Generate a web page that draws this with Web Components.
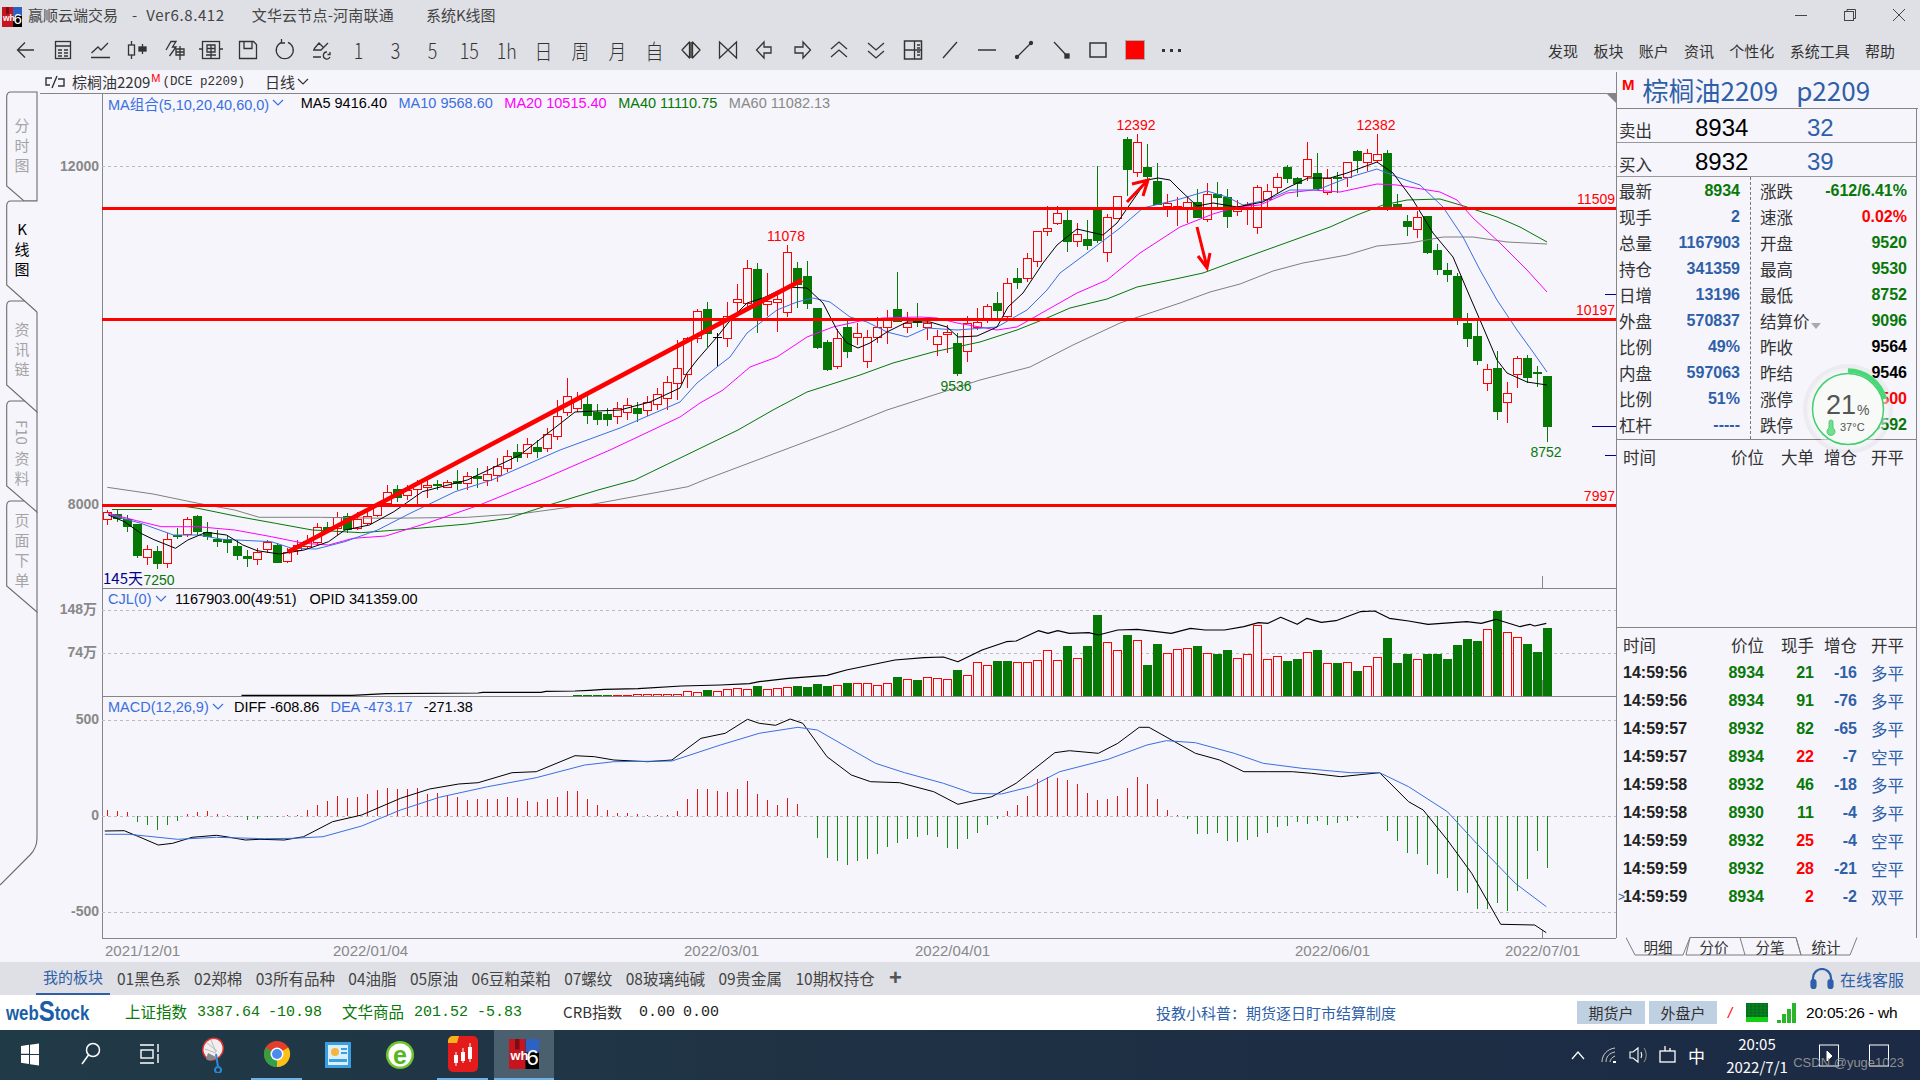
<!DOCTYPE html>
<html lang="zh"><head><meta charset="utf-8"><title>赢顺云端交易</title>
<style>
html,body{margin:0;padding:0;width:1920px;height:1080px;overflow:hidden;background:#f5f5fb;font-family:"Noto Sans CJK SC","Liberation Sans",sans-serif}
</style></head>
<body>
<app-window></app-window>
<script>
const CJK='"Noto Sans CJK SC","Liberation Sans",sans-serif';
const ARI='"Liberation Sans","Noto Sans CJK SC",sans-serif';
function def(name,css,html){
  customElements.define(name,class extends HTMLElement{
    constructor(){super();const s=this.attachShadow({mode:'open'});
      s.innerHTML=`<style>${css}</style>${typeof html==='function'?html(this):html}`;}
  });
}
/* ---------- toolbar ---------- */
const ic=(b,w=24)=>`<svg width="${w}" height="24" viewBox="0 0 24 24" fill="none" stroke="#333" stroke-width="1.3">${b}</svg>`;
const appIcon=(s)=>`<svg width="${s}" height="${s}" viewBox="0 0 20 20"><rect width="20" height="20" fill="#000"/><rect width="11" height="20" fill="#c8141c"/><rect x="11" width="9" height="9" fill="#2b62c4"/><rect x="4" y="0" width="3" height="7" fill="#7a0e12"/><text x="1" y="14" font-family="Liberation Sans" font-weight="700" font-size="8.5" fill="#fff">wh</text><text x="11.5" y="17" font-family="Liberation Sans" font-size="15" fill="#fff">6</text></svg>`;
const TOOLS=[
 ic('<path d="M20 12H4M11 4.5 3.500 12 11 19.500"/>'),
 ic('<rect x="4.500" y="3.500" width="15" height="17"/><path d="M4.500 8h15M7 12h4M13 12h4M7 15h4M13 15h4M7 18h4M13 18h4"/>'),
 ic('<path d="M3.500 15 10 9l3 3 7-7M3 19.500h19"/>'),
 ic('<rect x="3.500" y="7" width="6" height="10"/><path d="M6.500 3v4M6.500 17v4"/><rect x="14" y="9" width="7" height="4" fill="#333"/><path d="M17.500 6v3M17.500 13v3"/>'),
 ic('<path d="M4 12 9 3.500h5L10.500 9H14l-6.500 9M14 11h8v6h-8zM18 8v14M14 14h8"/>'),
 ic('<rect x="3.500" y="3.500" width="17" height="17"/><path d="M0 11h3.500M20.500 11H24M8 7h8v7H8zM8 10.500h8M12 7v14M7 17h10"/>'),
 ic('<path d="M3.500 3.500h14l3 3v14h-17zM8 3.500v7h8v-7"/>'),
 ic('<path d="M15 4.300A8.500 8.500 0 1 1 8.500 4.300M8.500 1v4H12"/>'),
 ic('<path d="M3 12h8l7-7M3 19h8M4 11l5-6 4 4M17 14a3.500 3.500 0 1 0 3 5M20 14v2.500h-2.500"/>'),
 '1','3','5','15','1h','日','周','月','自',
 ic('<path d="M10.500 4 3 12l7.500 8zM13.500 4 21 12l-7.500 8zM12 4v16" stroke-linejoin="round"/>'),
 ic('<path d="M3.500 4v16L12 12zM20.500 4v16L12 12z"/>'),
 ic('<path d="M11 4 3.500 12l7.500 8v-5h7V9h-7z"/>'),
 ic('<path d="M13 4l7.500 8-7.500 8v-5H5V9h8z"/>'),
 ic('<path d="M4 11l8-7 8 7M4 19l8-7 8 7"/>'),
 ic('<path d="M4 5l8 7 8-7M4 13l8 7 8-7"/>'),
 ic('<rect x="3.500" y="3" width="17" height="18" stroke-width="1.500"/><path d="M3.500 12h17M13.500 3v18M16 7h3M16 10h3M16 14h3M16 17h3"/>'),
 ic('<path d="M5 20 19 4"/>'),
 ic('<path d="M3 12h18" stroke-width="1.500"/>'),
 ic('<path d="M5 19 19 5"/><circle cx="5" cy="19" r="1.500" fill="#333"/><circle cx="19" cy="5" r="1.500" fill="#333"/>'),
 ic('<path d="M5 4 19 19"/><rect x="16" y="16" width="4" height="4" fill="#333"/>'),
 ic('<rect x="4" y="5" width="16" height="14" stroke-width="1.500"/>'),
 '<span class="rs"></span>',
 '<span class="dots"><i></i><i></i><i></i></span>'
];
def('tool-bar',`:host{display:flex;height:35px;background:#dfe0e5;padding-left:8px;align-items:center;box-sizing:border-box;padding-bottom:5px;color:#333}
.t{width:36.95px;display:flex;justify-content:center;align-items:center;font:300 21px ${CJK};flex:none}
.t span.n{display:inline-block;transform:scaleX(.85);margin-top:-1px}
.rs{display:block;width:18px;height:18px;background:#f00;border:1px solid #aaa}
.dots{display:flex;gap:5px}.dots i{display:block;width:3px;height:3px;background:#333}
.menu{margin-left:auto;display:flex;gap:15.3px;padding-right:25px;font:15px ${CJK};color:#333;font-weight:400}`,
 `${TOOLS.map(t=>`<div class="t">${t.length<3?`<span class="n">${t}</span>`:t}</div>`).join('')}
 <div class="menu"><span>发现</span><span>板块</span><span>账户</span><span>资讯</span><span>个性化</span><span>系统工具</span><span>帮助</span></div>`);

def('title-bar',`:host{display:flex;height:35px;background:#dfe0e5;align-items:center;font:15px ${CJK};color:#444;padding-left:2px;position:relative;white-space:pre;box-sizing:border-box;padding-bottom:6px}
svg{flex:none}.a{margin-left:6px}.d{margin-left:14px}.e{margin-left:9px;letter-spacing:.6px}.b{margin-left:27px;letter-spacing:.2px}.c{margin-left:32px}
.ctl{margin-left:auto;display:flex;align-items:center}
.ctl div{width:49px;display:flex;justify-content:center}`,
 `<span style="display:flex;margin-top:5px">${appIcon(20)}</span><span class="a">赢顺云端交易</span><span class="d">-</span><span class="e">Ver6.8.412</span><span class="b">文华云节点-河南联通</span><span class="c">系统K线图</span>
 <div class="ctl"><div><svg width="14" height="14" fill="none" stroke="#444"><path d="M1 7.500h12"/></svg></div><div><svg width="14" height="14" fill="none" stroke="#444"><rect x="1.500" y="3.500" width="9" height="9"/><path d="M4 3.500v-2h8.500v9h-2"/></svg></div><div style="margin-right:-3px;width:49px"><svg width="14" height="14" fill="none" stroke="#444"><path d="M1 1l12 12M13 1 1 13"/></svg></div></div>`);

/* ---------- side tabs ---------- */
def('side-tabs',`:host{display:block;width:38px;flex:none;position:relative;font:15px ${CJK};color:#a4a4a4}
svg{position:absolute;left:0;top:0}
.col{position:relative;padding-top:22px;display:flex;flex-direction:column}
.i{display:flex;justify-content:center;padding-left:7px;box-sizing:border-box;width:37px}
.i span{writing-mode:vertical-rl;letter-spacing:5px;line-height:17px}
.i b{font-weight:400;letter-spacing:0;margin-bottom:6px}
.on{color:#000}.on span{text-orientation:upright}`,
 `<svg width="38" height="892" viewBox="0 70 38 892" fill="none" stroke="#6c6c6c" stroke-width="1.100">
  <path fill="#f5f5fb" d="M37 512 V612 L6.700 586 V506 Q6.700 501 11 501H37"/>
  <path fill="#f5f5fb" d="M37 412 V512 L6.700 486 V406 Q6.700 401 11 401H37"/>
  <path fill="#f5f5fb" d="M37 312 V412 L6.700 385 V306 Q6.700 301 11 301H37"/>
  <path fill="#f5f5fb" d="M37 92 V201 H24 L6.700 186 V97 Q6.700 92 11 92Z"/>
  <path fill="#f5f5fb" d="M37 201 H11 Q6.700 201 6.700 206 V285 L37 312"/>
  <path d="M37 612 V838 Q37 848 30 855 L0 885"/>
 </svg>
 <div class="col">
  <div class="i" style="height:109px;padding-top:26px;box-sizing:border-box"><span>分时图</span></div>
  <div class="i on" style="height:100px;padding-top:21px;box-sizing:border-box"><span>K线图</span></div>
  <div class="i" style="height:100px;padding-top:21px;box-sizing:border-box"><span>资讯链</span></div>
  <div class="i" style="height:100px;padding-top:19px;box-sizing:border-box"><span><b>F10</b>资料</span></div>
  <div class="i" style="height:100px;padding-top:12px;box-sizing:border-box"><span>页面下单</span></div>
 </div>`);

/* ---------- symbol bar ---------- */
def('symbol-bar',`:host{display:flex;height:23px;align-items:center;font:15px ${CJK};color:#333;padding-left:7px;box-sizing:border-box}
sup{color:#f00;font:11px ${ARI};vertical-align:6px;margin-left:1px}
.m{font:12.5px "Liberation Mono",monospace;margin-left:2px}
.d{margin-left:20px}svg{margin-left:2px}`,
 `<svg width="20" height="14" viewBox="0 0 20 14" fill="none" stroke="#333" stroke-width="1.400" style="margin:0 7px 0 0"><path d="M7 3H1v7h4M13 4h6v7h-6M12 1 7 13"/></svg><span>棕榈油2209<sup>M</sup></span><span class="m">(DCE p2209)</span><span class="d">日线</span><svg width="12" height="8" fill="none" stroke="#333" stroke-width="1.200"><path d="M1 1l5 5 5-5"/></svg>`);

/* ---------- chart data ---------- */
const Z9=(a)=>a.map(([x,y])=>[100+x/2.45,480+y/3]);
const Z12=(a)=>a.map(([x,y])=>[100+x/1.0316,590+y/3]);
const c9=[['r',90,95,118,135],['g',90,103,118,125],['g',105,118,140,155],['g',132,132,228,235],['r',195,208,230,255],['g',198,213,252,268],['r',160,178,250,263],['g',145,165,172,178],['r',110,118,162,170],['g',105,108,155,165],['g',125,155,170,180],['g',150,177,185,200],['g',165,178,190,220],['g',180,198,228,240],['g',210,228,238,260],['r',205,215,238,255],['r',180,187,208,220],['g',190,195,248,250],['r',205,215,242,248],['r',180,195,210,225],['r',165,183,197,205],['r',130,142,187,195],['g',125,140,150,160],['r',95,110,145,165],['g',100,108,150,160],['r',95,118,143,150],['r',95,108,128,135],['r',65,78,104,110],['r',15,37,68,75],['g',15,27,55,65],['r',15,30,45,60],['r',0,8,28,75],['r',0,16,20,55],['g',0,12,16,30],['r',0,5,22,25]]
 .map(([t,a,b,c,d])=>[t,480+a/3,480+b/3,480+c/3,480+d/3]);
const cRest=[['g',470,481,484,490],['r',472,476,483,490],['g',468,476,479,488],['r',466,474,480,486],['r',458,466,475,482],['r',450,456,468,472],['g',444,452,458,462],['r',438,444,453,458],['g',440,447,452,458],['r',428,434,448,452],['r',400,416,436,440],['r',378,396,412,416],['r',392,399,408,412],['g',396,404,416,424],['g',404,412,420,425],['g',408,414,420,426],['r',402,408,416,424],['r',398,405,412,420],['g',402,408,414,422],['r',396,402,410,416],['r',388,394,404,410],['r',376,382,398,410],['r',340,368,383,400],
['r',337,338,374,388],['r',309,311,338,343],['g',302,309,334,347],['k',333,337,337,367],['r',302,316,338,347],['r',284,299,302,317],['r',260,268,303,307],['g',263,269,318,333],['r',273,301,304,316],['r',291,299,302,332],['r',245,252,312,317],['g',262,268,285,308],['g',261,276,304,309],['g',308,308,348,349],['g',340,342,370,371],['r',329,338,366,369],['g',321,327,352,358],['r',323,333,337,345],['r',330,337,361,368],['r',317,327,337,343],['r',310,319,327,344],['g',272,309,322,322],['r',312,323,327,333],['g',303,321,323,327],['r',317,323,327,340],['r',330,336,344,356],['r',325,332,333,353],['g',333,343,374,376],['r',316,323,351,362],['r',308,322,327,330],['r',304,306,320,323],['g',292,303,311,318],['r',278,283,316,318],['g',268,278,283,289],['r',253,258,278,282],['r',231,231,261,267],['r',206,228,231,236],['r',206,213,223,225],['g',210,220,242,252],['r',223,234,241,247],['g',220,239,246,250],['g',166,210,241,243],['r',214,217,252,262],['r',196,196,218,219],['g',137,139,170,196],['r',134,142,172,177],['g',144,167,177,180],['g',163,181,205,205],['r',194,203,206,217],['r',197,206,209,226],
['r',197,202,209,223],['g',189,202,218,218],['r',183,194,219,222],['g',182,194,198,208],['g',189,197,217,228],['r',200,207,211,216],['r',202,205,207,225],['r',185,187,227,234],['r',184,191,199,208],['r',173,177,187,193],['g',165,167,179,183],['g',177,178,184,197],['r',142,159,176,181],['g',153,173,189,190],['r',169,178,192,195],['g',172,177,179,193],['r',162,162,177,187],['g',150,151,161,173],['r',149,153,162,171],['r',134,154,160,163],['g',150,153,210,211],['g',194,204,207,207],['g',215,221,227,236],['r',211,217,229,238],['g',216,216,253,254],['g',244,250,270,275],['g',263,270,275,282],['g',273,276,318,325],['g',313,323,339,347],['g',320,336,361,365],['r',364,369,383,391],['g',351,368,412,420],['r',382,393,402,423],['r',356,358,374,388],['g',355,358,378,383],['g',366,372,374,387],['g',376,376,427,442]];
const CANDLES=c9.concat(cRest);
const cx=i=>107+10*i, RED='#f00', GRN='#067806';
function candles(){return CANDLES.map((c,i)=>{const [t,h,a,b,l]=c,x=cx(i),H=Math.round(h),A=Math.round(a),B=Math.round(b),L=Math.round(l);
 if(t==='r')return `<path d="M${x+.5} ${H}V${A}M${x+.5} ${B}V${L}" stroke="${RED}"/><rect x="${x-3.5}" y="${A+.5}" width="8" height="${Math.max(B-A,2)}" fill="#f5f5fb" stroke="${RED}"/>`;
 if(t==='k')return `<path d="M${x+.5} ${H}V${L}M${x-4} ${A+.5}H${x+5}" stroke="#000"/>`;
 return `<path d="M${x+.5} ${H}V${L}" stroke="${GRN}"/><rect x="${x-4}" y="${A}" width="9" height="${Math.max(B-A,2)}" fill="${GRN}"/>`;}).join('');}
const poly=(p,c,w=1)=>`<polyline fill="none" stroke="${c}" stroke-width="${w}" stroke-linejoin="round" points="${p.map(q=>q[0].toFixed(1)+','+q[1].toFixed(1)).join(' ')}"/>`;
const MA5=Z9([[20,105],[60,125],[100,160],[130,178],[185,205],[215,180],[260,157],[310,165],[350,195],[385,212],[440,222],[500,210],[560,185],[600,150],[660,135],[720,95],[790,35],[900,0]]).concat([[520,455],[575,412],[620,410],[650,402],[680,388],[687,373],[697,360],[717,337],[732,318],[747,303],[763,298],[787,287],[807,288],[823,303],[837,330],[847,343],[858,348],[870,343],[887,332],[907,322],[930,322],[947,327],[958,337],[977,336],[997,327],[1008,307],[1023,293],[1043,263],[1057,245],[1077,229],[1103,235],[1117,223],[1133,200],[1147,180],[1158,178],[1170,180],[1180,190],[1197,206],[1213,203],[1237,207],[1263,202],[1287,188],[1308,178],[1330,178],[1347,173],[1377,162],[1393,173],[1413,200],[1433,233],[1453,257],[1470,297],[1483,327],[1497,360],[1507,373],[1527,382],[1547,385]]);
const MA10=Z9([[20,103],[100,130],[180,165],[240,165],[300,178],[420,185],[470,205],[530,207],[600,185],[680,150],[760,100],[870,35],[960,0]]).concat([[560,450],[620,428],[680,402],[697,383],[717,367],[730,357],[747,333],[777,310],[797,302],[813,298],[830,302],[850,317],[867,322],[887,332],[907,337],[927,328],[957,330],[997,327],[1027,310],[1047,290],[1060,273],[1087,253],[1120,228],[1143,208],[1180,199],[1207,191],[1227,197],[1243,205],[1267,200],[1290,190],[1317,190],[1347,178],[1377,169],[1397,177],[1420,185],[1443,207],[1463,237],[1480,270],[1497,300],[1517,330],[1533,352],[1547,372]]);
const MA20=Z9([[20,100],[90,122],[150,140],[240,140],[330,150],[420,170],[500,190],[560,195],[620,175],[700,168],[800,130],[930,75],[1080,0]]).concat([[610,450],[680,417],[700,403],[723,390],[750,367],[777,357],[807,337],[833,327],[860,321],[883,318],[920,317],[937,318],[957,323],[997,330],[1017,327],[1047,310],[1077,293],[1107,280],[1140,253],[1180,227],[1213,214],[1237,207],[1260,205],[1287,193],[1313,190],[1340,192],[1377,184],[1397,185],[1440,192],[1457,200],[1473,218],[1500,243],[1527,270],[1547,292]]);
const MA40=Z9([[200,78],[240,85],[340,110],[430,130],[520,150],[640,158],[750,148],[900,132],[1000,115],[1100,75],[1220,30],[1310,0]]).concat([[738,430],[773,410],[807,392],[860,375],[893,363],[933,352],[980,342],[1017,330],[1047,318],[1070,308],[1107,299],[1137,287],[1180,278],[1203,273],[1230,263],[1280,245],[1330,227],[1357,215],[1383,205],[1407,200],[1440,199],[1467,207],[1497,217],[1520,227],[1547,242]]);
const MA60=Z9([[18,22],[130,42],[240,70],[330,90],[390,112],[540,112],[700,115],[900,112],[1040,100],[1220,70],[1330,45],[1440,20],[1480,0]]).concat([[837,430],[887,410],[940,393],[980,380],[1030,367],[1073,345],[1120,323],[1180,303],[1210,292],[1240,284],[1273,271],[1303,263],[1347,255],[1377,246],[1410,243],[1443,237],[1473,237],[1507,242],[1547,244]]);
const txt=(x,y,s,o={})=>`<text x="${x}" y="${y}" font-size="${o.s||14}" text-anchor="${o.a||'middle'}" fill="${o.c||RED}" font-weight="${o.w||400}" font-family='${o.f||ARI}' dominant-baseline="central">${s}</text>`;
const axis=(y,s)=>txt(99,y,s,{a:'end',c:'#888',w:700});
const dash=y=>`<path d="M102 ${y+.5}H1616" stroke="#bbb" stroke-dasharray="3 3" shape-rendering="crispEdges"/>`;
const lineC='#858585';
function kline(){
 return `<path d="M40 93.500H1616M102.500 93V588" stroke="${lineC}" shape-rendering="crispEdges"/>
 ${dash(166)}${axis(166,'12000')}${axis(504,'8000')}
 <g shape-rendering="crispEdges">${candles()}
 <path d="M1592 426.500H1616M1605 294.500H1616M1605 455.500H1616" stroke="#00008b"/>
 <path d="M1542.500 576V588" stroke="#888"/></g>
 <path d="M1606 93 1616 93 1616 103Z" fill="#858585"/>
 <path d="M112 509.500H152" stroke="#067806" stroke-width="1"/>
 ${poly(MA60,'#808080')}${poly(MA40,'#067806')}${poly(MA20,'#f0f')}${poly(MA10,'#3b6fe0')}${poly(MA5,'#000')}
 <path d="M102 208.500H1616M102 319.500H1616M102 505.500H1616" stroke="${RED}" stroke-width="3"/>
 <path d="M288 552 802 280" stroke="${RED}" stroke-width="4.500"/>
 <path d="M1127 202 1147 181M1132 184 1148 180 1143 196" stroke="${RED}" stroke-width="3" fill="none"/>
 <path d="M1197 227 1207 267M1198 256 1207 268 1210 253" stroke="${RED}" stroke-width="3" fill="none"/>
 ${txt(1136,125,'12392')}${txt(1376,125,'12382')}${txt(786,236,'11078')}${txt(956,386,'9536',{c:'#087808'})}
 ${txt(1546,452,'8752',{c:'#087808'})}${txt(1615,199,'11509',{a:'end'})}${txt(1615,310,'10197',{a:'end'})}${txt(1615,496,'7997',{a:'end'})}
 ${txt(159,580,'7250',{c:'#087808'})}${txt(103,577,'145天',{a:'start',c:'#00008b',s:15,f:CJK})}`;
}
const VOL=[[492,315,'g'],[502,315,'g'],[513,315,'g'],[523,315,'g'],[533,314,'r'],[544,314,'r'],[554,313,'r'],[564,313,'r'],[575,313,'r'],[585,313,'r'],[595,313,'r'],[606,303,'r'],[616,307,'r'],[627,300,'g'],[637,304,'r'],[647,297,'r'],[658,294,'r'],[668,298,'r'],[678,288,'g'],[689,297,'r'],[699,295,'r'],[709,292,'r'],[720,288,'g'],[730,291,'g'],[740,282,'g'],[750,288,'g'],[760,286,'r'],[771,279,'g'],[781,279,'r'],[791,279,'r'],[802,285,'r'],[812,279,'r'],[822,261,'g'],[833,268,'r'],[843,270,'g'],[853,262,'r'],[864,264,'r'],[874,267,'r'],[884,240,'g'],[895,256,'r'],[905,216,'r'],[915,226,'r'],[925,213,'g'],[936,213,'g'],[946,217,'r'],[956,216,'r'],[967,210,'r'],[977,181,'r'],[987,211,'r'],[998,168,'g'],[1008,204,'r'],[1018,168,'g'],[1029,75,'g'],[1039,157,'r'],[1049,181,'r'],[1060,135,'g'],[1070,151,'r'],[1080,225,'g'],[1091,162,'g'],[1101,190,'r'],[1111,177,'r'],[1122,174,'r'],[1132,168,'g'],[1142,188,'r'],[1153,192,'g'],[1163,180,'g'],[1173,205,'r'],[1183,192,'r'],[1194,105,'r'],[1204,208,'r'],[1215,198,'r'],[1225,213,'g'],[1235,207,'g'],[1245,187,'r'],[1256,180,'g'],[1266,219,'r'],[1276,219,'g'],[1287,216,'r'],[1297,243,'g'],[1307,229,'r'],[1318,202,'r'],[1328,144,'g'],[1338,219,'g'],[1349,192,'g'],[1359,208,'r'],[1369,192,'g'],[1380,192,'g'],[1390,207,'g'],[1400,165,'g'],[1411,147,'g'],[1421,153,'g'],[1431,117,'r'],[1442,62,'g'],[1452,126,'r'],[1462,141,'r'],[1472,162,'g'],[1483,186,'g'],[1493,114,'g']];
const VLINE=[[146,316],[260,316],[295,311],[390,309],[395,307],[455,307],[460,304],[490,303],[505,301],[520,298],[555,296],[600,288],[640,285],[670,281],[680,275],[710,265],[750,256],[770,240],[820,210],[850,203],[870,201],[885,215],[910,180],[935,155],[945,153],[968,122],[978,130],[988,122],[1000,130],[1020,128],[1030,135],[1050,120],[1070,118],[1090,125],[1105,130],[1125,115],[1140,120],[1160,120],[1180,110],[1195,98],[1205,100],[1218,82],[1235,103],[1245,85],[1260,97],[1275,92],[1300,65],[1315,63],[1330,85],[1350,93],[1370,103],[1395,98],[1410,95],[1425,100],[1440,88],[1465,110],[1475,103],[1480,108],[1492,100]];
function volume(){
 const bars=VOL.map(([zx,top,t])=>{const i=Math.round((zx/1.0316-7)/10),x=cx(i),y=Math.round(590+top/3);
  return t==='g'?`<rect x="${x-4}" y="${y}" width="9" height="${696-y}" fill="${GRN}"/>`:`<rect x="${x-3.5}" y="${y+.5}" width="8" height="${696-y}" fill="#f5f5fb" stroke="${RED}"/>`;}).join('');
 return `<path d="M102 588.500H1616M102.500 588V696" stroke="${lineC}" shape-rendering="crispEdges"/>${dash(610)}${dash(653)}
 ${txt(97,609,'148万',{a:'end',c:'#888',w:700,f:ARI})}${txt(97,652,'74万',{a:'end',c:'#888',w:700,f:ARI})}
 <g shape-rendering="crispEdges">${bars}<path d="M1542.500 680V696" stroke="#888"/></g>${poly(Z12(VLINE),'#000',1.200)}`;
}
const MBARS=[18,16,12,-18,-28,-42,-28,-14,5,12,14,6,4,-4,-12,-10,-2,-4,3,4,18,34,45,60,55,58,65,78,85,80,82,85,65,70,62,58,48,50,50,52,58,55,45,42,50,58,76,75,50,34,18,10,8,5,2,3,4,16,50,82,82,75,72,82,106,66,48,32,55,35,0,-65,-125,-135,-148,-135,-130,-115,-92,-80,-70,-62,-58,-62,-95,-98,-70,-50,-28,-10,15,32,60,110,118,115,108,95,68,48,50,60,85,118,95,52,18,2,-10,-55,-55,-50,-75,-78,-72,-62,-50,-32,-30,-18,-25,-15,-28,-22,-16,-6,0,0,-45,-75,-110,-115,-148,-175,-185,-225,-230,-278,-280,-260,-285,-225,-188,-104,-155];
const DIFF=[[5,723],[25,722],[40,740],[60,765],[75,760],[95,742],[120,736],[130,740],[150,750],[165,748],[190,750],[210,740],[240,695],[270,675],[310,625],[340,597],[370,582],[390,578],[425,548],[450,545],[490,497],[510,500],[530,510],[565,515],[590,510],[620,445],[645,430],[668,388],[680,400],[697,406],[712,387],[725,400],[750,500],[775,555],[795,575],[825,578],[860,605],[885,643],[920,620],[945,580],[985,488],[1000,482],[1030,490],[1050,460],[1072,412],[1082,412],[1130,490],[1155,510],[1180,545],[1205,545],[1230,545],[1250,550],[1280,560],[1320,548],[1350,635],[1365,660],[1390,750],[1415,850],[1445,1003],[1480,1005],[1492,1028]];
const DEA=[[5,733],[30,733],[80,748],[120,742],[170,746],[200,745],[230,740],[270,708],[310,660],[350,622],[400,590],[450,563],[500,525],[530,515],[590,513],[640,465],[680,430],[720,412],[740,420],[770,470],[800,520],[830,548],[870,580],[900,610],[930,612],[960,590],[990,545],[1040,508],[1080,465],[1100,452],[1130,458],[1170,490],[1200,520],[1240,535],[1290,548],[1320,548],[1350,590],[1390,665],[1420,760],[1460,880],[1492,950]];
function macd(){
 const b=MBARS.map((d,i)=>{if(!d)return '';const x=cx(i)+.5,e=816+(-d/3);return `<path d="M${x} 816V${e.toFixed(0)}" stroke="${d>0?'#e81010':'#138a13'}"/>`;}).join('');
 return `<path d="M102 696.500H1616M102.500 696V938" stroke="${lineC}" shape-rendering="crispEdges"/>${dash(720)}${dash(816)}${dash(912)}
 ${axis(719,'500')}${axis(815,'0')}${axis(911,'-500')}
 <g shape-rendering="crispEdges">${b}<path d="M1542.500 930V938" stroke="#888"/></g>${poly(Z12(DIFF),'#000')}${poly(Z12(DEA),'#3b6fe0')}`;
}
const chev=c=>`<svg width="12" height="8" fill="none" stroke="${c}" stroke-width="1.200" style="margin-left:3px;flex:none"><path d="M1 1l5 5 5-5"/></svg>`;
const PANELS={
 k:{y:93,h:495,lh:20,draw:kline,gap:11.5,leg:`<span style="color:#3b6fe0;margin-right:5px">MA组合(5,10,20,40,60,0)${chev('#3b6fe0')}</span><span style="color:#000">MA5 9416.40</span><span style="color:#3b6fe0">MA10 9568.60</span><span style="color:#f0f">MA20 10515.40</span><span style="color:#067806">MA40 11110.75</span><span style="color:#888">MA60 11082.13</span>`},
 v:{y:588,h:108,lh:22,draw:volume,gap:11,leg:`<span style="color:#3b6fe0;width:56px">CJL(0)${chev('#3b6fe0')}</span><span style="color:#000;margin-right:2px">1167903.00(49:51)</span><span style="color:#000">OPID 341359.00</span>`},
 m:{y:696,h:242,lh:22,draw:macd,gap:11,leg:`<span style="color:#3b6fe0;width:115px">MACD(12,26,9)${chev('#3b6fe0')}</span><span style="color:#000">DIFF -608.86</span><span style="color:#3b6fe0">DEA -473.17</span><span style="color:#000">-271.38</span>`}
};
class ChartPanel extends HTMLElement{
 constructor(){super();const s=this.attachShadow({mode:'open'});const p=PANELS[this.getAttribute('kind')];
  s.innerHTML=`<style>:host{display:block;position:relative;width:1578px;height:${p.h}px;overflow:hidden}
  .plot{position:absolute;left:0;top:0;display:block}
  .leg{position:relative;display:flex;gap:${p.gap}px;padding-left:70px;height:${p.lh}px;align-items:center;font:14.5px ${ARI};white-space:nowrap}
  .leg span{display:inline-flex;align-items:center;flex:none}</style>
  <svg class="plot" width="1578" height="${p.h}" viewBox="38 ${p.y} 1578 ${p.h}">${p.draw()}</svg><div class="leg">${p.leg}</div>`;}
}
customElements.define('chart-panel',ChartPanel);
def('date-axis',`:host{display:flex;height:24px;align-items:center;font:15px ${ARI};color:#888;box-sizing:border-box;border-top:1px solid #858585;margin-left:64px;padding-left:3px}
span{width:75px;flex:none;white-space:nowrap}`,
 ['2021/12/01',153,'2022/01/04',276,'2022/03/01',156,'2022/04/01',305,'2022/06/01',135,'2022/07/01'].map(v=>typeof v==='number'?`<i style="width:${v}px;flex:none"></i>`:`<span>${v}</span>`).join(''));

/* ---------- quote panel ---------- */
const C={g:'#087808',b:'#2f5fa8',r:'#f00',k:'#000'};
const L=[['最新','8934','g'],['现手','2','b'],['总量','1167903','b'],['持仓','341359','b'],['日增','13196','b'],['外盘','570837','b'],['比例','49%','b'],['内盘','597063','b'],['比例','51%','b'],['杠杆','-----','b']];
const R=[['涨跌','-612/6.41%','g'],['速涨','0.02%','r'],['开盘','9520','g'],['最高','9530','g'],['最低','8752','g'],['结算价<b class="tri"></b>','9096','g'],['昨收','9564','k'],['昨结','9546','k'],['涨停','10500','r'],['跌停','8592','g']];
const row=([a,b,c])=>`<div class="r"><span class="l">${a}</span><span class="v" style="color:${C[c]}">${b}</span></div>`;
const TICKS=[['14:59:56','8934','21','g','-16','多平'],['14:59:56','8934','91','g','-76','多平'],['14:59:57','8932','82','g','-65','多平'],['14:59:57','8934','22','r','-7','空平'],['14:59:58','8932','46','g','-18','多平'],['14:59:58','8930','11','g','-4','多平'],['14:59:59','8932','25','r','-4','空平'],['14:59:59','8932','28','r','-21','空平'],['14:59:59','8934','2','r','-2','双平']];
const head=(c)=>`<div class="hd"><span style="width:70px">时间</span><span class="w1">价位</span><span class="w2">${c}</span><span class="w3">增仓</span><span class="w4">开平</span></div>`;
def('gauge-widget',`:host{display:block;width:92px;height:92px;position:absolute;left:186px;top:293px}
svg{display:block}`,
 `<svg width="92" height="92" viewBox="-46 -46 92 92">
 <defs><radialGradient id="g" cx="50%" cy="50%" r="50%"><stop offset="70%" stop-color="#fff" stop-opacity=".92"/><stop offset="100%" stop-color="#fff" stop-opacity=".35"/></radialGradient></defs>
 <circle r="45" fill="#000" opacity=".04"/><circle r="41" fill="url(#g)"/>
 <circle r="35.500" fill="#f8faf8" stroke="#3fd070" stroke-width="1.500"/>
 <path d="M0 -38.500A38.500 38.500 0 0 1 37 -10" fill="none" stroke="#48d877" stroke-width="4.500"/>
 <text x="-22" y="5" font-family="Liberation Sans" font-size="27" fill="#555">21</text>
 <text x="9" y="6" font-family="Liberation Sans" font-size="14" fill="#555">%</text>
 <text x="-8" y="22" font-family="Liberation Sans" font-size="11" fill="#555">37°C</text>
 <path d="M-19 13a2 2 0 0 1 4 0v6a4 4 0 1 1-4 0z" fill="#6ee090" stroke="#3cbf66" stroke-width=".8"/>
 </svg>`);
def('quote-panel',`:host{display:block;width:304px;flex:none;position:relative;padding-top:2px;box-sizing:border-box;color:#333;font:16.5px ${CJK}}
.box{border-left:1px solid #858585;width:301px;height:866px;box-sizing:border-box;display:flex;flex-direction:column}
.h{height:37px;display:flex;align-items:center;color:#2f5fa8;font:26px ${CJK};border-bottom:1px solid #858585;box-sizing:border-box;margin-right:-1px;padding-bottom:2px}
.h i{font:700 15px ${ARI};color:#f00;align-self:flex-start;margin:4px 8px 0 5px}
.h b{font-weight:400;margin-left:18px}
.body{flex:1;border-right:1px solid #858585;display:flex;flex-direction:column;min-height:0}
.bid{height:34px;display:flex;border-bottom:1px solid #999;box-sizing:border-box;align-items:center;font:24px ${ARI};color:#000;padding-left:2px;padding-top:4px}
.bid .t{font:16.5px ${CJK};color:#333;width:76px;padding-top:5px}.bid .p{width:112px}.bid .q{color:#2f5fa8}
.tbl{display:grid;grid-template-columns:134px 1fr;height:263px;border-bottom:1px solid #858585;box-sizing:border-box}
.col{display:flex;flex-direction:column;padding-top:1px}
.col.a{padding:1px 10px 0 2px;border-right:1px dashed #777;box-sizing:border-box}
.col.b{padding:1px 9px 0 9px}
.r{display:flex;justify-content:space-between;align-items:center;height:26px}
.v{font:700 16px ${ARI}}.tri{display:inline-block;width:0;height:0;border:5px solid transparent;border-top:6px solid #aaa;border-bottom:0;margin-left:1px;vertical-align:-1px}
.hd{display:flex;height:34px;align-items:center;padding-left:6px;flex:none}
.hd span{text-align:right;display:block;flex:none;box-sizing:border-box}.hd span:first-child{text-align:left}
.w1{width:71px}.w2{width:50px}.w3{width:43px}.w4{width:47px}
.up{height:188px;border-bottom:1px solid #858585;box-sizing:border-box;flex:none}
.tick-list{margin-top:-3px}
.t-row{display:flex;height:28px;align-items:center;padding-left:6px;position:relative;flex:none}
.t-row span{display:block;flex:none;text-align:right;font:700 16px ${ARI}}
.t-row .tm{width:70px;text-align:left;color:#222}
.t-row .o{font:16.5px ${CJK};color:#2f5fa8;width:47px}
.t-row em{position:absolute;left:1px;top:7px;font:12px ${ARI};color:#2f5fa8}
.strip{height:24px;margin-top:-1px;position:relative;display:flex;padding-left:14px;font:14.5px ${CJK};color:#333}
.strip svg{position:absolute;left:10px;top:0}
.strip span{position:relative;width:56px;text-align:center;height:18px;line-height:19px;flex:none}`,
 `<div class="box"><div class="h"><i>M</i><span>棕榈油2209</span><b>p2209</b></div>
 <div class="body">
 <div class="bid"><span class="t">卖出</span><span class="p">8934</span><span class="q">32</span></div>
 <div class="bid"><span class="t">买入</span><span class="p">8932</span><span class="q">39</span></div>
 <div class="tbl"><div class="col a">${L.map(row).join('')}</div><div class="col b">${R.map(row).join('')}</div></div>
 <div class="up">${head('大单')}</div>
 ${head('现手')}
 <div class="tick-list">${TICKS.map((t,i)=>`<div class="t-row">${i==8?'<em>&gt;</em>':''}<span class="tm">${t[0]}</span><span class="w1" style="color:${C.g}">${t[1]}</span><span class="w2" style="color:${C[t[3]]}">${t[2]}</span><span class="w3" style="color:${C.b}">${t[4]}</span><span class="o">${t[5]}</span></div>`).join('')}</div>
 </div></div>
 <div class="strip"><svg width="236" height="19" fill="none" stroke="#7d7d7d"><path d="M2 0 H64" stroke="#f5f5fb" stroke-width="3"/><path d="M0 .5 9 18H57L64 .5M60 18 64 .5H114L119 18H60M114 .5H170L175 18H119M170 .5 175 18H224L231 .5"/></svg><span>明细</span><span>分价</span><span>分笔</span><span>统计</span></div>
 <gauge-widget></gauge-widget>`);

/* ---------- bottom bars ---------- */
def('board-tabs',`:host{display:flex;height:33px;background:#dfe0e5;align-items:center;font:15.5px ${CJK};color:#444;box-sizing:border-box;padding-left:36px;white-space:nowrap}
.on{color:#2f5fa8;height:33px;display:flex;align-items:center;padding:0 7px 3px;border-bottom:2px solid #2f5fa8;box-sizing:border-box;margin-right:7px;width:74px;font-size:15px}
.i{margin:0 13.4px 2px 0}.plus{font:700 22px ${ARI};color:#555;margin:0 0 2px 1px;line-height:1}
.svc{margin-left:auto;display:flex;align-items:center;gap:6px;color:#2f5fa8;font-size:16px;padding-right:16px}`,
 `<div class="on">我的板块</div>${['01黑色系','02郑棉','03所有品种','04油脂','05原油','06豆粕菜粕','07螺纹','08玻璃纯碱','09贵金属','10期权持仓'].map(t=>`<span class="i">${t}</span>`).join('')}<span class="plus">+</span>
 <div class="svc"><svg width="24" height="22" viewBox="0 0 24 22" fill="none" stroke="#2f5fa8" stroke-width="2.200"><path d="M3 18V10a9 9 0 0 1 18 0v8"/><rect x="1.500" y="12" width="4" height="8" rx="2" fill="#2f5fa8"/><rect x="18.500" y="12" width="4" height="8" rx="2" fill="#2f5fa8"/></svg>在线客服</div>`);
def('status-strip',`:host{display:flex;height:35px;background:#fff;align-items:center;white-space:nowrap;color:#222}
.logo{font:700 21px ${ARI};color:#1a5ea8;display:inline-block;transform:scaleX(.8);transform-origin:left center;margin-left:6px;width:83px;letter-spacing:0}
.logo b{font-size:30px;line-height:0;font-weight:700;vertical-align:-1px}
.m{font:15px "Liberation Mono",monospace}.c{font:15.5px ${CJK};margin-bottom:3px}
.g{color:#087808}
.tip{margin-left:auto;color:#2f5fa8;font:15px ${CJK};margin-bottom:1px}
.btn{background:#bfd0e3;height:23px;width:68px;display:flex;align-items:center;justify-content:center;font:15px ${CJK};color:#333;flex:none}
.sl{color:#f00;font:italic 15px ${ARI};margin-left:11px;width:18px;flex:none}
.clk{font:15.5px ${ARI};color:#000;margin-right:23px;white-space:nowrap;width:91px;flex:none;letter-spacing:-.2px}`,
 `<span class="logo">web<b>S</b>tock</span>
 <span class="c g" style="margin-left:36px">上证指数</span><span class="m g" style="margin-left:10px">3387.64</span><span class="m g" style="margin-left:8px">-10.98</span>
 <span class="c g" style="margin-left:20px">文华商品</span><span class="m g" style="margin-left:10px">201.52</span><span class="m g" style="margin-left:9px">-5.83</span>
 <span class="c" style="margin-left:41px;font-size:15px;color:#333">CRB指数</span><span class="m" style="margin-left:17px">0.00</span><span class="m" style="margin-left:8px">0.00</span>
 <span class="tip">投教小科普：期货逐日盯市结算制度</span>
 <span class="btn" style="margin-left:181px;margin-right:4px">期货户</span><span class="btn">外盘户</span>
 <span class="sl">/</span>
 <svg width="22" height="19" viewBox="0 0 22 19" style="flex:none"><rect width="22" height="19" fill="#063"/><rect y="14" width="22" height="5" fill="#0fd10f"/><path d="M0 2h22M0 5h22M0 8h22M0 11h22M3 0v14M7 0v14M11 0v14M15 0v14M19 0v14" stroke="#0a8a0a" stroke-width="1"/></svg>
 <svg width="22" height="20" viewBox="0 0 22 20" style="margin-left:8px;flex:none" fill="#2ab52a"><rect x="1" y="17" width="4" height="3"/><rect x="6" y="11" width="4" height="9"/><rect x="11" y="6" width="4" height="14"/><rect x="16" y="0" width="4" height="20"/></svg>
 <span class="clk" style="margin-left:8px">20:05:26 - wh</span>`);
const ti=(w,b)=>`<svg width="${w}" height="36" viewBox="0 0 ${w} 36">${b}</svg>`;
def('task-bar',`:host{display:flex;height:50px;align-items:center;background:linear-gradient(90deg,#213a47 0%,#1e3044 55%,#1c2a45 100%);color:#fff;font:15px ${CJK};position:relative}
.s{display:flex;justify-content:center;align-items:center;height:50px;flex:none;box-sizing:border-box}
.s.act{background:#4a606e;border-bottom:2px solid #6fb2e8}
.s.run{border-bottom:2px solid #6fb2e8}
.tray{margin-left:auto;display:flex;align-items:center;height:50px}
.clock{text-align:center;width:76px;line-height:23px;font-size:15px;margin-left:14px;white-space:nowrap}
.wm{position:absolute;right:16px;top:25px;color:#9a9a9a;font:13px ${ARI};opacity:.9}`,
 `<div class="s" style="width:60px">${ti(24,'<path fill="#fff" d="M3 9l8-1.200v9H3zM12 7.700 21 6.400V17h-9zM3 18h8v9l-8-1.200zM12 18h9v10.600l-9-1.300z"/>')}</div>
 <div class="s" style="width:60px">${ti(26,'<g fill="none" stroke="#fff" stroke-width="1.500"><circle cx="16" cy="13" r="6.500"/><path d="M11.500 18 5 27"/></g>')}</div>
 <div class="s" style="width:60px">${ti(26,'<g fill="none" stroke="#fff" stroke-width="1.400"><rect x="4" y="13" width="12" height="8"/><path d="M3 8h14M3 26h14M21 7v8M21 17v9"/></g>')}</div>
 <div class="s" style="width:68px">${ti(34,'<ellipse cx="16" cy="12" rx="10" ry="11" transform="rotate(25 16 12)" fill="#f3eeee" stroke="#d33" stroke-width="1.500"/><path d="M10 6l10 8M14 3l5 12M8 12l11 4" stroke="#bbb"/><path d="M9 22c4 3 9 1 10-2l-8-4z" fill="#888"/><path d="M19 17l2 13M21 30a3 3 0 1 0 .1 0" fill="none" stroke="#2a8ad8" stroke-width="2"/>')}</div>
 <div class="s run" style="width:51px;margin-left:3px">${ti(30,'<circle cx="15" cy="18" r="13" fill="#e33e2b"/><path d="M15 18 26.300 24.500A13 13 0 0 1 8.500 29.300z" fill="#4aa84a"/><path d="M15 18 8.500 29.300A13 13 0 0 1 3.700 11.500z" fill="#3c9a3f"/><path d="M15 18 26.300 11.500A13 13 0 0 1 15 31z" fill="#fbc116"/><path d="M15 18 15 31A13 13 0 0 1 3.700 24.500z" fill="#33a04a"/><circle cx="15" cy="18" r="6.500" fill="#fff"/><circle cx="15" cy="18" r="5" fill="#4a8cf0"/>')}</div>
 <div class="s" style="width:72px">${ti(28,'<rect x="1" y="5" width="26" height="26" fill="#3a9ee0"/><rect x="4" y="8" width="20" height="20" fill="#d9effb"/><circle cx="11" cy="15" r="4" fill="#f5b53c"/><rect x="17" y="11" width="6" height="2" fill="#3a9ee0"/><rect x="17" y="15" width="6" height="2" fill="#3a9ee0"/><rect x="5" y="22" width="18" height="3" fill="#3a9ee0"/>')}</div>
 <div class="s" style="width:52px">${ti(32,'<circle cx="16" cy="18" r="14" fill="#6fc72c"/><circle cx="16" cy="18" r="11.500" fill="#fff"/><text x="16" y="27" text-anchor="middle" font-family="Liberation Sans" font-weight="700" font-size="25" fill="#58b51f">e</text>')}</div>
 <div class="s run" style="width:51px;margin-left:11px">${ti(32,'<rect x="1" y="0" width="30" height="36" rx="5" fill="#e31b1b"/><path d="M1 7V5a5 5 0 0 1 5-5h6l-2 7z" fill="#f6b21a"/><rect x="7" y="19" width="4" height="8" fill="#fff"/><rect x="14" y="16" width="4" height="9" fill="#fff"/><rect x="21" y="11" width="4" height="12" fill="#fff"/><path d="M9 16v14M16 12v15M23 7v19" stroke="#fff"/>')}</div>
 <div class="s act" style="margin-left:6px;width:60px">${appIcon(30).replace('height="30"','height="36"')}</div>
 <div class="tray">
 <svg width="14" height="10" fill="none" stroke="#fff" stroke-width="1.200"><path d="M1 9l6-7 6 7"/></svg>
 <svg width="20" height="18" viewBox="0 0 20 18" fill="none" stroke="#ccc" stroke-width="1" style="margin-left:14px"><path d="M3 16C3 9 8 3 16 2M7 16C7 11 10 7 16 6M11 16c0-2 2-5 5-6"/><path d="M14 16h3" stroke="#fff" stroke-width="2"/></svg>
 <svg width="22" height="20" viewBox="0 0 22 20" fill="none" stroke="#fff" stroke-width="1.100" style="margin-left:9px"><path d="M2 7h3l5-4v14l-5-4H2z"/><path d="M13 7c1 2 1 4 0 6" /><path d="M16 3c3 4 3 10 0 14" stroke="#888"/></svg>
 <svg width="22" height="20" viewBox="0 0 22 20" fill="none" stroke="#fff" stroke-width="1.300" style="margin-left:8px"><rect x="2" y="6" width="15" height="11"/><path d="M7 1v5M12 3v3"/></svg>
 <span style="margin-left:8px;font-size:17px">中</span>
 <div class="clock">20:05<br>2022/7/1</div>
 <svg width="22" height="26" viewBox="0 0 22 26" fill="none" stroke="#fff" style="margin-left:24px"><rect x=".5" y="3" width="19" height="21"/><path d="M8 9l5 5-5 5z" fill="#fff"/></svg>
 <svg width="22" height="26" viewBox="0 0 22 26" fill="none" stroke="#fff" style="margin-left:28px;margin-right:29px"><rect x=".5" y="3" width="19" height="21"/></svg>
 </div><span class="wm">CSDN @yuge1023</span>`);

/* ---------- shell ---------- */
def('chart-column',`:host{display:flex;flex-direction:column;width:1578px;flex:none}`,
 `<symbol-bar></symbol-bar><chart-panel kind="k"></chart-panel><chart-panel kind="v"></chart-panel><chart-panel kind="m"></chart-panel><date-axis></date-axis>`);
def('app-window',`:host{display:flex;flex-direction:column;width:1920px;height:1080px;background:#f5f5fb;overflow:hidden}
.main{display:flex;height:892px;flex:none}`,
 `<title-bar></title-bar><tool-bar></tool-bar><div class="main"><side-tabs></side-tabs><chart-column></chart-column><quote-panel></quote-panel></div><board-tabs></board-tabs><status-strip></status-strip><task-bar></task-bar>`);
</script>
</body></html>
